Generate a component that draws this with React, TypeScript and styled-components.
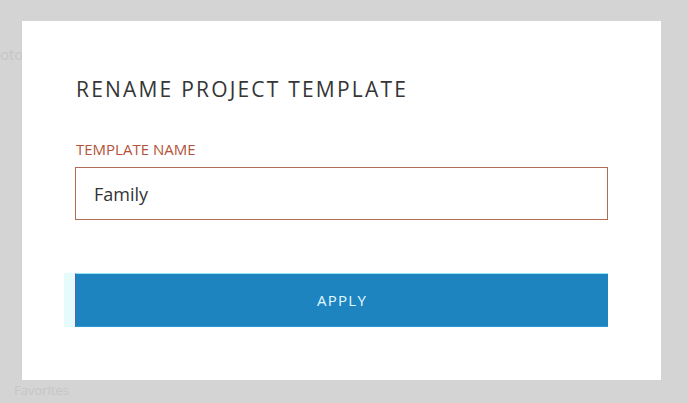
import React from "react";
import styled, { createGlobalStyle } from "styled-components";

const Global = createGlobalStyle`
  html, body { margin: 0; padding: 0; }
  body { background: #d4d4d4; font-family: "Open Sans", "Liberation Sans", sans-serif; }
`;

const Page = styled.div`
  position: relative;
  width: 688px;
  height: 403px;
  overflow: hidden;
  background: #d4d4d4;
`;

const Backdrop = styled.div`
  display: grid;
  grid-template-rows: 64px 1fr auto;
  height: 100%;
  padding: 0 0 4px 14px;
  box-sizing: border-box;
  color: #c6c6c6;
`;

const GhostLine = styled.div<{ $indent?: number; $size?: number }>`
  margin-left: ${(p) => p.$indent ?? 0}px;
  font-size: ${(p) => p.$size ?? 15}px;
  align-self: end;
  white-space: nowrap;
`;

const Overlay = styled.div`
  position: absolute;
  left: 22px;
  top: 21px;
  width: 639px;
  height: 359px;
  background: #fff;
  box-sizing: border-box;
  padding: 54px 53px 0 53px;
  display: flex;
  flex-direction: column;
`;

const Title = styled.h2`
  margin: 0 0 0 1px;
  font-family: "Open Sans", sans-serif;
  font-weight: 400;
  font-size: 21px;
  line-height: 28px;
  letter-spacing: 2.2px;
  color: #353535;
`;

const Label = styled.label`
  margin: 36px 0 0 1px;
  font-size: 15px;
  line-height: 20px;
  color: #b4533a;
  text-transform: uppercase;
`;

const Input = styled.input`
  margin-top: 8px;
  height: 53px;
  box-sizing: border-box;
  border: 1px solid #b06a55;
  padding: 0 18px;
  font-family: "Open Sans", sans-serif;
  font-size: 18px;
  color: #333;
  outline: none;
  background: #fff;
`;

const ButtonWrap = styled.div`
  margin: 53px 0 0 -11px;
  padding-left: 11px;
  background: #e6fcfc;
`;

const ApplyButton = styled.button`
  display: block;
  width: 100%;
  height: 54px;
  border: none;
  border-top: 1px solid #8fe6f2;
  border-left: 1px solid #5a60b0;
  border-bottom: 1px solid #2a9ad0;
  background: #1e84c0;
  color: #e0fbff;
  font-family: "Open Sans", sans-serif;
  font-size: 15px;
  font-weight: 500;
  letter-spacing: 1.3px;
  text-transform: uppercase;
  cursor: pointer;
`;

export default function App() {
  return (
    <Page>
      <Global />
      <Backdrop>
        <GhostLine $indent={-14}>oto</GhostLine>
        <div />
        <GhostLine $size={13}>Favorites</GhostLine>
      </Backdrop>
      <Overlay>
        <Title>RENAME PROJECT TEMPLATE</Title>
        <Label htmlFor="tn">Template name</Label>
        <Input id="tn" defaultValue="Family" />
        <ButtonWrap>
          <ApplyButton>Apply</ApplyButton>
        </ButtonWrap>
      </Overlay>
    </Page>
  );
}
